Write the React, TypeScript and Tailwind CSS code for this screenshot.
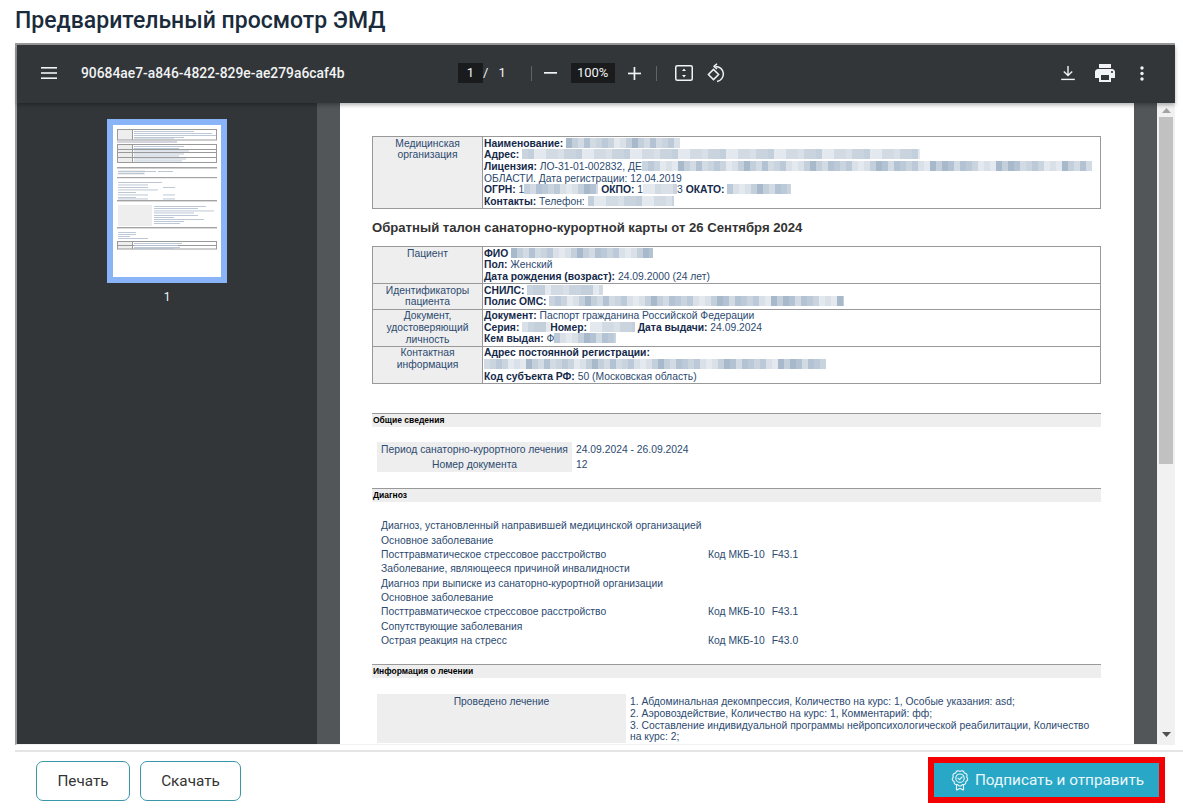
import type { ReactNode } from 'react';

const MOSAIC = ['#b4c3d4', '#c9d4df', '#d9e0e8', '#a8b9cc', '#d2dbe4', '#bcc9d8', '#e4e9ef', '#c3cfdb'];

function Blur({ w, seed = 1, light = false }: { w: number; seed?: number; light?: boolean }) {
	const cells = Array.from({ length: Math.ceil(w / 6) }, (_, i) => {
		const idx = ((i + 1) * 2654435 + seed * 40503) >>> 3;
		return light ? MOSAIC[[1, 2, 4, 6, 7][idx % 5]] : MOSAIC[idx % MOSAIC.length];
	});
	return (
		<span className="inline-flex h-[10px] overflow-hidden align-[-1px]" style={{ width: w }}>
			{cells.map((color, i) => (
				<span key={i} className="h-full w-[6px] shrink-0" style={{ backgroundColor: color }} />
			))}
		</span>
	);
}

function B({ children }: { children: ReactNode }) {
	return <b className="font-bold text-[#14294a]">{children}</b>;
}

function Line({ children }: { children: ReactNode }) {
	return <div className="h-[11.7px] whitespace-nowrap">{children}</div>;
}

function Row({ label, children, last = false }: { label: ReactNode; children: ReactNode; last?: boolean }) {
	return (
		<div className={last ? 'flex' : 'flex border-b border-[#999]'}>
			<div className="w-[110px] shrink-0 border-r border-[#999] bg-[#eee] py-[0.5px] text-center">{label}</div>
			<div className="min-w-0 flex-1 py-[0.5px] pl-[1px]">{children}</div>
		</div>
	);
}

function Band({ children, className }: { children: ReactNode; className: string }) {
	return (
		<div className={`h-[14px] border-t border-[#999] bg-[#eee] pl-[1px] text-[8.5px] leading-[13px] font-bold text-black ${className}`}>
			{children}
		</div>
	);
}

function DiagnosisLine({ text, code }: { text: string; code?: string }) {
	return (
		<div className="flex h-[14.4px] items-center whitespace-nowrap">
			<span className="w-[327px]">{text}</span>
			{code && (
				<span>
					Код МКБ-10<span className="ml-[7px]">{code}</span>
				</span>
			)}
		</div>
	);
}

function Thumbnail() {
	const lines: [number, number, number][] = [
		[21, 6, 60], [21, 8, 78], [21, 10, 82], [21, 12, 50], [21, 13.5, 40],
		[21, 21, 50], [21, 23, 45], [21, 25.5, 55], [21, 28.5, 50], [21, 30.5, 45],
		[21, 33.5, 52], [21, 35.5, 48], [5, 46, 38], [45, 46, 15], [5, 48, 25], [28, 48, 3],
		[5, 57, 44], [5, 59.5, 30], [5, 62, 30], [50, 62, 12], [5, 64.5, 40], [5, 67, 18],
		[5, 69.5, 30], [50, 69.5, 12], [5, 72, 18], [5, 73.5, 30], [50, 73.5, 12],
		[41, 81, 52], [41, 83, 44], [41, 85.5, 60], [41, 87.5, 40], [41, 90, 44], [41, 92, 20],
		[41, 94, 50], [41, 96, 30], [41, 98, 26], [5, 107, 18], [5, 109, 18], [5, 111, 12], [5, 113, 30],
		[21, 118, 48], [21, 120, 44], [21, 122, 46], [21, 123, 40],
	];
	return (
		<svg width="108" height="152" viewBox="0 0 108 152" className="block">
			<rect width="108" height="152" fill="#fff" />
			<g fill="#eee" stroke="none">
				<rect x="4" y="4" width="15" height="11" />
				<rect x="4" y="19" width="15" height="19" />
				<rect x="5" y="80" width="34" height="21" />
				<rect x="5" y="45" width="27" height="5" />
				<rect x="4" y="116" width="15" height="8" />
			</g>
			<g fill="none" stroke="#9a9a9a" strokeWidth="1">
				<rect x="4.5" y="4.5" width="99" height="10.5" />
				<rect x="4.5" y="19.5" width="99" height="18" />
				<path d="M19.5 4.5V15M19.5 19.5V37.5M4.5 24.5H103.5M4.5 27.5H103.5M4.5 32.5H103.5" />
				<rect x="4.5" y="116.5" width="99" height="7.5" />
				<path d="M19.5 116.5V124M4.5 120.5H103.5" />
			</g>
			<g fill="#a3a3a3">
				<rect x="4" y="42" width="100" height="1.5" />
				<rect x="4" y="52" width="100" height="1.2" />
				<rect x="4" y="75" width="100" height="1.4" />
				<rect x="4" y="102" width="100" height="1.4" />
			</g>
			<rect x="4" y="16.5" width="60" height="1" fill="#aab" />
			<g fill="#b6c2d2">
				{lines.map(([x, y, w]) => (
					<rect key={`${x}-${y}`} x={x} y={y} width={w} height="0.9" />
				))}
			</g>
		</svg>
	);
}

function scallopPath(cx: number, cy: number, r1: number, r2: number, n: number) {
	const p = (a: number, r: number) => `${(cx + Math.sin(a) * r).toFixed(2)} ${(cy - Math.cos(a) * r).toFixed(2)}`;
	let d = `M${p(0, r1)}`;
	for (let i = 0; i < n; i++) {
		const a1 = ((i + 0.5) / n) * Math.PI * 2;
		const a2 = ((i + 1) / n) * Math.PI * 2;
		d += ` Q${p(a1, r2)} ${p(a2, r1)}`;
	}
	return d + ' Z';
}

function SignIcon() {
	return (
		<svg width="18" height="21" viewBox="0 0 18 21" className="shrink-0" fill="none" stroke="#eef9fb" strokeWidth="1.1" strokeLinejoin="round" strokeLinecap="round">
			<path d="M5.5 14v6l3.5-1.6 3.5 1.6v-6" />
			<path d={scallopPath(9, 8.2, 6.8, 9.2, 9)} fill="#29a7c6" />
			<circle cx="9" cy="8.2" r="4.2" />
			<path d="M7 8.2l1.5 1.5 2.6-2.8" />
		</svg>
	);
}

export default function App() {
	return (
		<div className="h-[810px] w-[1183px] overflow-hidden bg-white [font-family:Roboto,sans-serif]">
			<h1 className="pt-[6px] pl-[15px] text-[23px] leading-[29px] font-medium text-[#1a2b3c]">Предварительный просмотр ЭМД</h1>

			<div className="mt-[8px] ml-[15px] flex h-[702px] w-[1160px] flex-col border-t-2 border-b border-l-2 border-t-[#9a9a9a] border-b-[#f1f1f1] border-l-[#9a9a9a]">
				{/* toolbar */}
				<div className="relative z-10 flex h-[58px] shrink-0 items-center bg-[#323639] pb-[2px] text-[#f1f3f4] shadow-[0_2px_4px_rgba(0,0,0,0.3)]">
					<svg width="16" height="12" viewBox="0 0 16 12" className="ml-[24px]" fill="#f1f3f4">
						<rect width="16" height="1.6" />
						<rect y="5.2" width="16" height="1.6" />
						<rect y="10.4" width="16" height="1.6" />
					</svg>
					<span className="ml-[24px] w-[377px] text-[13.85px] font-medium">90684ae7-a846-4822-829e-ae279a6caf4b</span>
					<span className="flex h-[20px] w-[25px] items-center justify-center bg-[#191b1c] text-[13px]">1</span>
					<span className="text-[13px]">/</span>
					<span className="ml-[10px] text-[13px]">1</span>
					<span className="ml-[25px] h-[15px] w-px bg-[#5f6368]" />
					<svg width="13" height="2" viewBox="0 0 13 2" className="ml-[12px]" fill="#f1f3f4">
						<rect width="13" height="1.7" />
					</svg>
					<span className="ml-[14px] flex h-[20px] w-[44px] items-center justify-center bg-[#191b1c] text-[13px]">100%</span>
					<svg width="13" height="13" viewBox="0 0 13 13" className="ml-[13px]" fill="#f1f3f4">
						<rect y="5.6" width="13" height="1.7" />
						<rect x="5.6" width="1.7" height="13" />
					</svg>
					<span className="ml-[15px] h-[15px] w-px bg-[#5f6368]" />
					<svg width="18" height="16" viewBox="0 0 18 16" className="ml-[18px]" fill="none">
						<rect x="0.75" y="0.75" width="16.5" height="14.5" rx="1.5" stroke="#f1f3f4" strokeWidth="1.5" />
						<path d="M9 3.5l2 2.4H7zM9 12.5l-2-2.4h4z" fill="#f1f3f4" />
					</svg>
					<svg width="18" height="20" viewBox="0 0 18 20" className="ml-[14px]" fill="none" stroke="#f1f3f4" strokeWidth="1.5">
						<path d="M1.4 11.5L6.5 6.4l5.1 5.1-5.1 5.1z" />
						<path d="M8.6 3.4a7.6 7.6 0 0 1 1.4 15.1" />
						<path d="M10 0.8L7 3.4l3 2.6" strokeLinejoin="round" />
					</svg>
					<svg width="16" height="16" viewBox="0 0 16 16" className="ml-auto" fill="none" stroke="#f1f3f4" strokeWidth="1.4">
						<path d="M8 1v9.2M3.8 6.6L8 10.6l4.2-4" />
						<path d="M1.2 14.4h13.6" />
					</svg>
					<svg width="20" height="20" viewBox="2 2 20 20" className="ml-[19px]" fill="#f1f3f4">
						<path d="M19 8H5c-1.66 0-3 1.34-3 3v6h4v4h12v-4h4v-6c0-1.66-1.34-3-3-3zm-3 11H8v-5h8v5zm3-7c-.55 0-1-.45-1-1s.45-1 1-1 1 .45 1 1-.45 1-1 1zm-1-9H6v4h12V3z" />
					</svg>
					<svg width="4" height="15" viewBox="0 0 4 15" className="mr-[31px] ml-[25px]" fill="#f1f3f4">
						<circle cx="2" cy="2" r="1.7" />
						<circle cx="2" cy="7.5" r="1.7" />
						<circle cx="2" cy="13" r="1.7" />
					</svg>
				</div>

				<div className="flex min-h-0 flex-1">
					{/* thumbnails */}
					<aside className="flex w-[300px] shrink-0 flex-col items-center bg-[#323639] pt-[16px]">
						<div className="border-[6px] border-[#8ab4f8]">
							<Thumbnail />
						</div>
						<span className="mt-[7px] text-[12px] leading-[14px] text-[#f1f3f4]">1</span>
					</aside>

					{/* document */}
					<main className="min-w-0 flex-1 overflow-hidden bg-[#525659] pl-[23px]">
						<div className="h-[700px] w-[794px] bg-white px-[32px] pt-[33px] text-[10.33px] leading-[11.7px] text-[#2c4a70] [font-family:'Liberation_Sans',Arial,sans-serif]">
							<div className="w-[729px] border border-[#999]">
								<Row last label={<>Медицинская<br />организация</>}>
									<Line>
										<B>Наименование:</B> <Blur w={114} seed={1} />
									</Line>
									<Line>
										<B>Адрес:</B> <Blur w={398} seed={2} light />
									</Line>
									<Line>
										<B>Лицензия:</B> ЛО-31-01-002832, ДЕ
										<Blur w={450} seed={3} />
									</Line>
									<Line>ОБЛАСТИ. Дата регистрации: 12.04.2019</Line>
									<Line>
										<B>ОГРН:</B> 1<Blur w={74} seed={4} />
										<B> ОКПО:</B> 1
										<Blur w={34} seed={5} light />3 <B>ОКАТО:</B> <Blur w={64} seed={6} />
									</Line>
									<Line>
										<B>Контакты:</B> Телефон: <Blur w={86} seed={7} light />
									</Line>
								</Row>
							</div>

							<h2 className="mt-[11px] h-[26px] text-[13.12px] leading-[15px] font-bold text-[#333]">
								Обратный талон санаторно-курортной карты от 26 Сентября 2024
							</h2>

							<div className="w-[729px] border border-[#999]">
								<Row label="Пациент">
									<Line>
										<B>ФИО</B> <Blur w={142} seed={8} />
									</Line>
									<Line>
										<B>Пол:</B> Женский
									</Line>
									<Line>
										<B>Дата рождения (возраст):</B> 24.09.2000 (24 лет)
									</Line>
								</Row>
								<Row label={<>Идентификаторы<br />пациента</>}>
									<Line>
										<B>СНИЛС:</B> <Blur w={76} seed={9} light />
									</Line>
									<Line>
										<B>Полис ОМС:</B> <Blur w={295} seed={10} />
									</Line>
								</Row>
								<Row label={<>Документ,<br />удостоверяющий<br />личность</>}>
									<Line>
										<B>Документ:</B> Паспорт гражданина Российской Федерации
									</Line>
									<Line>
										<B>Серия:</B> <Blur w={28} seed={11} light />
										<B>Номер:</B> <Blur w={45} seed={12} light /> <B>Дата выдачи:</B> 24.09.2024
									</Line>
									<Line>
										<B>Кем выдан:</B> Ф<Blur w={62} seed={13} />
									</Line>
								</Row>
								<Row last label={<>Контактная<br />информация</>}>
									<Line>
										<B>Адрес постоянной регистрации:</B>
									</Line>
									<Line>
										<Blur w={342} seed={14} />
									</Line>
									<Line>
										<B>Код субъекта РФ:</B> 50 (Московская область)
									</Line>
								</Row>
							</div>

							<Band className="mt-[29px] w-[729px]">Общие сведения</Band>
							<div className="mt-[15px] ml-[5px] flex">
								<div className="w-[195px] bg-[#eee] text-center">
									<div className="h-[15px] leading-[15px]">Период санаторно-курортного лечения</div>
									<div className="h-[15px] leading-[15px]">Номер документа</div>
								</div>
								<div className="pl-[4px]">
									<div className="h-[15px] leading-[15px]">24.09.2024 - 26.09.2024</div>
									<div className="h-[15px] leading-[15px]">12</div>
								</div>
							</div>

							<Band className="mt-[16px] w-[729px]">Диагноз</Band>
							<div className="mt-[17px] ml-[9px]">
								<DiagnosisLine text="Диагноз, установленный направившей медицинской организацией" />
								<DiagnosisLine text="Основное заболевание" />
								<DiagnosisLine text="Посттравматическое стрессовое расстройство" code="F43.1" />
								<DiagnosisLine text="Заболевание, являющееся причиной инвалидности" />
								<DiagnosisLine text="Диагноз при выписке из санаторно-курортной организации" />
								<DiagnosisLine text="Основное заболевание" />
								<DiagnosisLine text="Посттравматическое стрессовое расстройство" code="F43.1" />
								<DiagnosisLine text="Сопутствующие заболевания" />
								<DiagnosisLine text="Острая реакция на стресс" code="F43.0" />
							</div>

							<Band className="mt-[16px] w-[729px]">Информация о лечении</Band>
							<div className="mt-[16px] ml-[5px] flex">
								<div className="w-[249px] shrink-0 bg-[#eee] pt-[2px] pb-[10px] text-center">Проведено лечение</div>
								<div className="w-[470px] pt-[2px] pl-[4px]">
									1. Абдоминальная декомпрессия, Количество на курс: 1, Особые указания: asd;
									<br />
									2. Аэровоздействие, Количество на курс: 1, Комментарий: фф;
									<br />
									3. Составление индивидуальной программы нейропсихологической реабилитации, Количество на курс: 2;
								</div>
							</div>
						</div>
					</main>

					{/* right gutter + scrollbar */}
					<div className="w-[23px] shrink-0 bg-[#525659]" />
					<div className="flex w-[18px] shrink-0 flex-col items-center bg-[#f1f1f1]">
						<svg width="9" height="5" viewBox="0 0 9 5" className="mt-[5px] mb-[4px]" fill="#a3a3a3">
							<path d="M4.5 0L9 5H0z" />
						</svg>
						<div className="h-[347px] w-[14px] bg-[#c1c1c1]" />
						<svg width="9" height="5" viewBox="0 0 9 5" className="mt-auto mb-[7px]" fill="#505050">
							<path d="M0 0h9L4.5 5z" />
						</svg>
					</div>
				</div>
			</div>

			{/* footer */}
			<div className="mt-[5px] ml-[15px] flex w-[1168px] items-start border-t-2 border-[#e5e5e5] pt-[9px]">
				<button className="ml-[21px] h-[40px] w-[94px] rounded-[7px] border border-[#3a97a8] text-[15.3px] text-[#333]">Печать</button>
				<button className="ml-[10px] h-[40px] w-[101px] rounded-[7px] border border-[#3a97a8] text-[15.3px] text-[#333]">Скачать</button>
				<button className="mt-[-4px] ml-[687px] flex h-[46px] w-[237px] items-center justify-center gap-[6px] border-[6px] border-[#f40000] bg-[#29a7c6] pl-[2px] text-[15.3px] text-[#eaf7fa]">
					<SignIcon />
					Подписать и отправить
				</button>
			</div>
		</div>
	);
}
